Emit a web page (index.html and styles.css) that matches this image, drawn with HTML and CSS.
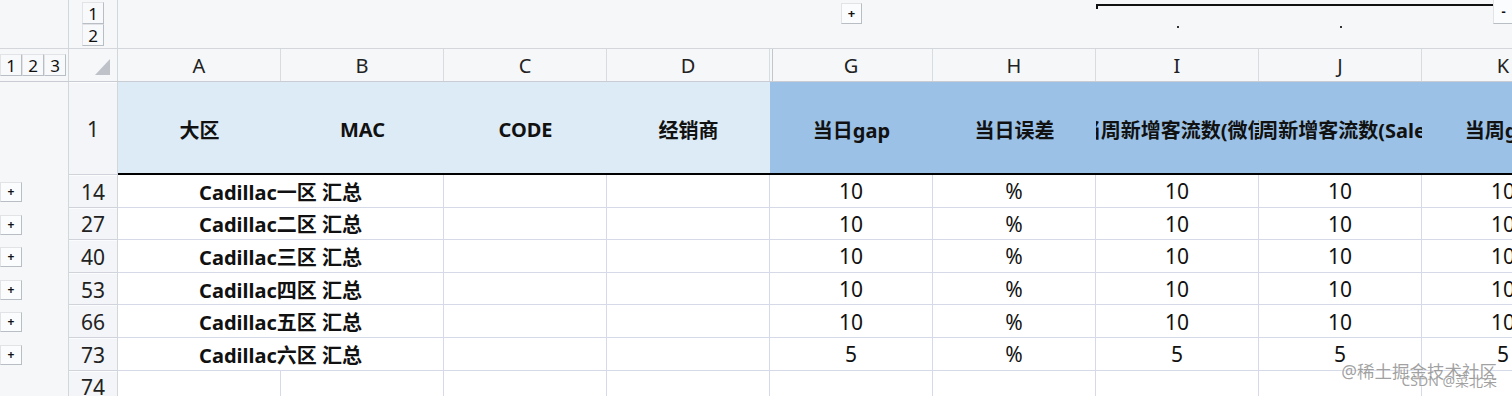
FILE: index.html
```html
<!DOCTYPE html>
<html lang="zh-CN">
<head>
    <meta charset="UTF-8">
    <title>汇总表</title>
    <link rel="stylesheet" href="styles.css">
</head>
<body>

<div class="sheet">
    <!-- 列分级显示区域 -->
    <div class="row outline">
        <div class="gutter"></div>
        <div class="corner-levels">
            <span class="lvl-btn">1</span>
            <span class="lvl-btn">2</span>
        </div>
        <span class="ol-btn ol-plus">+</span>
        <div class="ol-bracket">
            <div class="ol-line"></div>
            <span class="ol-btn ol-minus">-</span>
        </div>
        <span class="ol-dot col-i"></span>
        <span class="ol-dot col-j"></span>
    </div>

    <!-- 列标 -->
    <div class="row col-head">
        <div class="gutter row-levels">
            <span class="lvl-btn">1</span>
            <span class="lvl-btn">2</span>
            <span class="lvl-btn">3</span>
        </div>
        <div class="select-all"><span class="tri"></span></div>
        <div class="letter">A</div>
        <div class="letter">B</div>
        <div class="letter">C</div>
        <div class="letter">D</div>
        <div class="letter after-hidden">G</div>
        <div class="letter">H</div>
        <div class="letter">I</div>
        <div class="letter">J</div>
        <div class="letter">K</div>
    </div>

    <!-- 表头 -->
    <div class="row title-row">
        <div class="gutter"></div>
        <div class="row-num">1</div>
        <div class="th light"><span>大区</span></div>
        <div class="th light"><span>MAC</span></div>
        <div class="th light"><span>CODE</span></div>
        <div class="th light"><span>经销商</span></div>
        <div class="th dark"><span>当日gap</span></div>
        <div class="th dark"><span>当日误差</span></div>
        <div class="th dark"><span>当周新增客流数(微信)</span></div>
        <div class="th dark"><span>当周新增客流数(Sales)</span></div>
        <div class="th dark"><span>当周gap</span></div>
    </div>

    <div id="rows"></div>

    <div class="row data-row">
        <div class="gutter"></div>
        <div class="row-num">74</div>
        <div class="td"></div>
        <div class="td"></div>
        <div class="td"></div>
        <div class="td"></div>
        <div class="td"></div>
        <div class="td"></div>
        <div class="td"></div>
        <div class="td"></div>
        <div class="td"></div>
    </div>

    <div class="watermark">
        <div class="wm-main">@稀土掘金技术社区</div>
        <div class="wm-sub">CSDN @菜北朵</div>
    </div>
</div>

<script>
    // 各大区汇总行
    var summary = [
        { num: 14, name: "Cadillac一区 汇总", v: "10" },
        { num: 27, name: "Cadillac二区 汇总", v: "10" },
        { num: 40, name: "Cadillac三区 汇总", v: "10" },
        { num: 53, name: "Cadillac四区 汇总", v: "10" },
        { num: 66, name: "Cadillac五区 汇总", v: "10" },
        { num: 73, name: "Cadillac六区 汇总", v: "5" }
    ];

    var box = document.getElementById('rows');
    summary.forEach(function (r) {
        var row = document.createElement('div');
        row.className = 'row data-row';
        row.innerHTML =
            '<div class="gutter"><span class="ol-btn row-plus">+</span></div>' +
            '<div class="row-num">' + r.num + '</div>' +
            '<div class="td wide bold">' + r.name + '</div>' +
            '<div class="td"></div>' +
            '<div class="td"></div>' +
            '<div class="td num">' + r.v + '</div>' +
            '<div class="td num">%</div>' +
            '<div class="td num">' + r.v + '</div>' +
            '<div class="td num">' + r.v + '</div>' +
            '<div class="td num">' + r.v + '</div>';
        box.appendChild(row);
    });
</script>

</body>
</html>
```

FILE: styles.css
```css
* {
    box-sizing: border-box;
}

body {
    margin: 0;
    background-color: #f5f7f9;
    font-family: "Noto Sans", "Noto Sans CJK SC", sans-serif;
    color: #111;
    overflow: hidden;
}

.sheet {
    position: relative;
    width: 1512px;
    height: 396px;
    overflow: hidden;
}

/* 所有行共用同一套列宽 */
.row {
    display: grid;
    grid-template-columns: 69px 49px repeat(9, 163px);
}

.gutter {
    border-right: 1px solid #d3d6db;
    background-color: #f5f7f9;
}

/* 顶部列分级 */
.outline {
    height: 49px;
    border-bottom: 1px solid #d3d6db;
}

.outline > * {
    grid-row: 1;
}

.corner-levels {
    grid-column: 2;
    border-right: 1px solid #d3d6db;
    display: flex;
    flex-direction: column;
    padding: 2px 0 0 13px;
}

.lvl-btn {
    width: 22px;
    height: 22px;
    display: flex;
    justify-content: center;
    align-items: center;
    font-size: 17px;
    color: #111;
    background-color: #f8f9fb;
    border: 1px solid #e1e3e7;
    border-right-color: #b9bdc4;
    border-bottom-color: #b9bdc4;
}

.ol-btn {
    width: 21px;
    height: 21px;
    display: flex;
    justify-content: center;
    align-items: center;
    font-size: 13px;
    font-weight: bold;
    line-height: 1;
    color: #111;
    background-color: #fbfcfd;
    border: 1px solid #e1e3e7;
    border-right-color: #b9bdc4;
    border-bottom-color: #b9bdc4;
}

.ol-plus {
    grid-column: 7;
    justify-self: center;
    align-self: start;
    margin-top: 3px;
}

.ol-bracket {
    grid-column: 9 / 12;
    display: flex;
    align-items: flex-start;
    padding-right: 71px;
}

.ol-line {
    flex: 1;
    height: 5px;
    margin-top: 4px;
    border-top: 2px solid #111;
    border-left: 2px solid #111;
}

.ol-minus {
    border-top: none;
    height: 24px;
}

.ol-dot {
    width: 2px;
    height: 2px;
    background-color: #333;
    justify-self: center;
    align-self: start;
    margin-top: 26px;
}

.ol-dot.col-i { grid-column: 9; }
.ol-dot.col-j { grid-column: 10; }

/* 列标 */
.col-head {
    height: 33px;
    border-bottom: 1px solid #c9cdd3;
}

.row-levels {
    display: flex;
    align-items: flex-start;
    padding-top: 5px;
}

.select-all {
    position: relative;
    border-right: 1px solid #d3d6db;
}

.tri {
    position: absolute;
    right: 7px;
    bottom: 6px;
    width: 0;
    height: 0;
    border-left: 15px solid transparent;
    border-bottom: 16px solid #bfc3c9;
}

.letter {
    display: flex;
    justify-content: center;
    align-items: center;
    font-size: 20px;
    color: #222;
    border-right: 1px solid #d8dbe0;
}

.letter.after-hidden {
    box-shadow: inset 2px 0 0 #f5f7f9, inset 3px 0 0 #c3c7cd;
}

/* 行号 */
.row-num {
    display: flex;
    justify-content: center;
    align-items: center;
    padding-top: 2px;
    font-size: 21px;
    color: #222;
    background-color: #f3f5f8;
    border-right: 1px solid #d3d6db;
    border-bottom: 1px solid #d0d4da;
    box-shadow: inset 0 1px 0 #fbfcfd;
}

/* 表头行 */
.title-row {
    height: 93px;
}

.th {
    display: flex;
    justify-content: center;
    align-items: center;
    overflow: hidden;
    padding-top: 4px;
    border-bottom: 2px solid #000;
    font-size: 20px;
    font-weight: bold;
    white-space: nowrap;
}

.th span {
    flex-shrink: 0;
}

.th.light { background-color: #ddebf7; }
.th.dark { background-color: #9bc2e6; }

/* 数据行 */
.data-row {
    height: 32.6px;
}

.td {
    display: flex;
    justify-content: center;
    align-items: center;
    padding-top: 1px;
    overflow: hidden;
    white-space: nowrap;
    background-color: #fff;
    border-right: 1px solid #d6dae8;
    border-bottom: 1px solid #d6dae8;
    font-size: 21px;
}

.td.wide {
    grid-column: span 2;
}

.td.bold {
    font-size: 20px;
    font-weight: bold;
}

.row-plus {
    margin-top: 7px;
    width: 22px;
    height: 20px;
    font-size: 12px;
}

/* 右下角水印 */
.watermark {
    position: absolute;
    right: 15px;
    bottom: 8px;
    text-align: right;
    color: rgba(130, 130, 130, 0.75);
    text-shadow: 0 0 2px #fff;
    line-height: 1;
}

.wm-main {
    font-size: 17.5px;
}

.wm-sub {
    font-size: 14px;
    margin-top: -6px;
}
```
